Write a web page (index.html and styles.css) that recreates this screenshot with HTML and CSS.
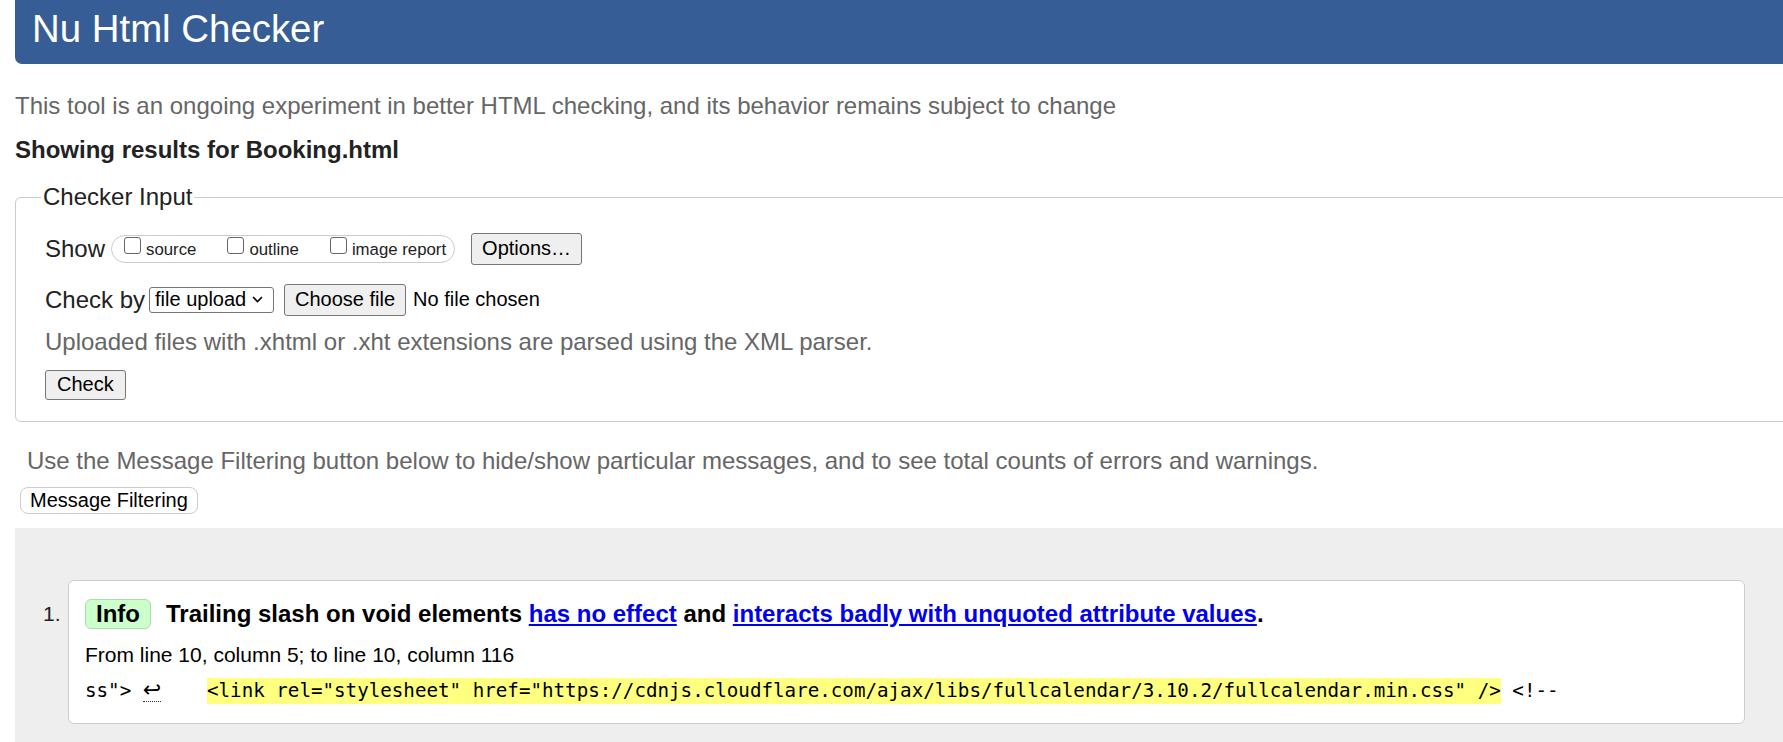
FILE: index.html
```html
<!DOCTYPE html>
<html lang="en">
<head>
<meta charset="utf-8">
<title>Nu Html Checker</title>
<link rel="stylesheet" href="styles.css">
</head>
<body>
<div class="page">
  <h1 class="title">Nu Html Checker</h1>
  <p class="intro">This tool is an ongoing experiment in better HTML checking, and its behavior remains subject to change</p>
  <p class="results-for">Showing results for Booking.html</p>
  <form class="checker-form">
    <fieldset class="checker-input">
      <legend class="legend">Checker Input</legend>
      <div class="row row-show">
        <span class="label">Show</span>
        <span class="pill">
          <label class="opt"><input class="cb" type="checkbox">source</label>
          <label class="opt"><input class="cb" type="checkbox">outline</label>
          <label class="opt"><input class="cb" type="checkbox">image report</label>
        </span>
        <button type="button" class="btn btn-options">Options…</button>
      </div>
      <div class="row row-by">
        <span class="label">Check by</span>
        <span class="select">file upload<svg class="chev" width="11" height="7" viewBox="0 0 11 7"><path d="M1 1 L5.5 5.5 L10 1" fill="none" stroke="#000" stroke-width="1.6"/></svg></span>
        <button type="button" class="btn btn-file">Choose file</button>
        <span class="nofile">No file chosen</span>
      </div>
      <p class="hint">Uploaded files with .xhtml or .xht extensions are parsed using the XML parser.</p>
      <div class="row row-check">
        <button type="button" class="btn btn-check">Check</button>
      </div>
    </fieldset>
  </form>
  <p class="filter-note">Use the Message Filtering button below to hide/show particular messages, and to see total counts of errors and warnings.</p>
  <button type="button" class="filter-btn">Message Filtering</button>
  <div class="results">
    <span class="num">1.</span>
    <div class="card">
      <div class="msg-title">
        <span class="badge">Info</span>
        <span class="msg-text">Trailing slash on void elements <a href="#" class="link">has no effect</a> and <a href="#" class="link">interacts badly with unquoted attribute values</a>.</span>
      </div>
      <p class="location">From line 10, column 5; to line 10, column 116</p>
      <p class="extract"><code class="code">ss"&gt; <span class="lf">↩</span>    <mark class="hl">&lt;link rel="stylesheet" href="https://cdnjs.cloudflare.com/ajax/libs/fullcalendar/3.10.2/fullcalendar.min.css" /&gt;</mark> &lt;!--</code></p>
    </div>
  </div>
</div>
</body>
</html>
```
FILE: styles.css
```css
html {
  overflow: hidden;
}
body {
  margin: 0;
  font-family: "Liberation Sans", Arial, sans-serif;
  color: #222;
  background: #fff;
}
.page {
  margin-left: 15px;
  width: 1800px;
}
.title {
  margin: 0;
  height: 64px;
  box-sizing: border-box;
  padding: 0 0 6px 17px;
  line-height: 58px;
  font-size: 38.4px;
  font-weight: normal;
  color: #fff;
  background: #365d95;
  border-radius: 0 0 7px 7px;
}
.intro {
  margin: 27.6px 0 0;
  font-size: 24px;
  line-height: 28.8px;
  color: #666;
}
.results-for {
  margin: 16px 0 0;
  font-size: 24px;
  line-height: 28.8px;
  font-weight: bold;
  color: #222;
}
.checker-form {
  margin: 18.2px 0 0;
}
.checker-input {
  margin: 0;
  padding: 20.5px 0 21px 29px;
  border: 1px solid #ccc;
  border-radius: 6px;
}
.legend {
  margin-left: -4px;
  padding: 0 2px;
  font-size: 24px;
  line-height: 28.8px;
  color: #222;
}
.row {
  display: flex;
  align-items: center;
  height: 32px;
}
.label {
  font-size: 24px;
  color: #222;
}
.row-show .pill {
  margin-left: 6px;
}
.pill {
  display: inline-flex;
  align-items: center;
  gap: 31px;
  height: 28px;
  box-sizing: border-box;
  padding: 0 8px 0 12px;
  border: 1px solid #ccc;
  border-radius: 14px;
}
.opt {
  font-size: 16.8px;
  color: #222;
  white-space: nowrap;
}
.cb {
  appearance: none;
  -webkit-appearance: none;
  width: 17px;
  height: 17px;
  margin: 0 5px 0 0;
  border: 1px solid #666;
  border-radius: 3px;
  background: #fff;
  vertical-align: 1px;
}
.btn {
  font-family: "Liberation Sans", Arial, sans-serif;
  font-size: 20px;
  color: #000;
  height: 32px;
  box-sizing: border-box;
  padding: 0 10px;
  background: #efefef;
  border: 1px solid #767676;
  border-radius: 3px;
}
.btn-options {
  margin-left: 16px;
}
.row-by {
  margin-top: 19px;
}
.select {
  display: inline-flex;
  align-items: center;
  justify-content: space-between;
  margin-left: 4px;
  width: 125px;
  height: 26px;
  box-sizing: border-box;
  padding: 0 10px 0 5px;
  font-size: 20px;
  color: #000;
  background: #fff;
  border: 1px solid #767676;
  border-radius: 3px;
}
.btn-file {
  margin-left: 10px;
}
.nofile {
  margin-left: 7px;
  font-size: 20px;
  color: #000;
}
.hint {
  margin: 12.6px 0 0;
  font-size: 24px;
  line-height: 28.8px;
  color: #666;
}
.row-check {
  margin-top: 12.6px;
  height: 30px;
}
.btn-check {
  height: 30px;
  padding: 0 11px;
}
.filter-note {
  margin: 25.6px 0 0;
  padding-left: 12px;
  font-size: 24px;
  line-height: 28.8px;
  color: #666;
}
.filter-btn {
  display: block;
  margin: 10.6px 0 0 5px;
  height: 27px;
  box-sizing: border-box;
  padding: 0 9px;
  font-family: "Liberation Sans", Arial, sans-serif;
  font-size: 20px;
  color: #000;
  background: #fff;
  border: 1px solid #ccc;
  border-radius: 8px;
}
.results {
  display: flex;
  align-items: flex-start;
  margin-top: 14px;
  padding: 52px 70px 40px 28px;
  background: #eee;
}
.num {
  width: 25px;
  flex: none;
  margin-top: 22px;
  font-size: 21px;
  line-height: 24px;
  color: #222;
}
.card {
  flex: 1;
  padding: 17px 16px 19px;
  background: #fff;
  border: 1px solid #ccc;
  border-radius: 6px;
}
.msg-title {
  display: flex;
  align-items: center;
  gap: 15px;
  height: 30px;
  margin-top: 1px;
}
.badge {
  height: 30px;
  box-sizing: border-box;
  padding: 0 10px;
  font-size: 24px;
  line-height: 28px;
  font-weight: bold;
  color: #000;
  background: #ccffcc;
  border: 1px solid #a9dca9;
  border-radius: 6px;
}
.msg-text {
  font-size: 24px;
  font-weight: bold;
  color: #000;
  white-space: nowrap;
}
.link {
  color: #0000ee;
  text-decoration: underline;
}
.location {
  margin: 14px 0 0;
  font-size: 21px;
  line-height: 24px;
  color: #000;
}
.extract {
  margin: 12px 0 0;
  line-height: 24px;
}
.code {
  font-family: "DejaVu Sans Mono", "Liberation Mono", monospace;
  font-size: 19.2px;
  white-space: pre;
  color: #000;
}
.lf {
  display: inline-block;
  width: 18px;
  height: 22px;
  line-height: 22px;
  font-family: "DejaVu Sans", sans-serif;
  font-size: 22px;
  text-align: center;
  border-bottom: 1px dotted #333;
  vertical-align: baseline;
}
.hl {
  background: #ffff80;
  color: #000;
  padding: 1px 0 2px;
}
```
